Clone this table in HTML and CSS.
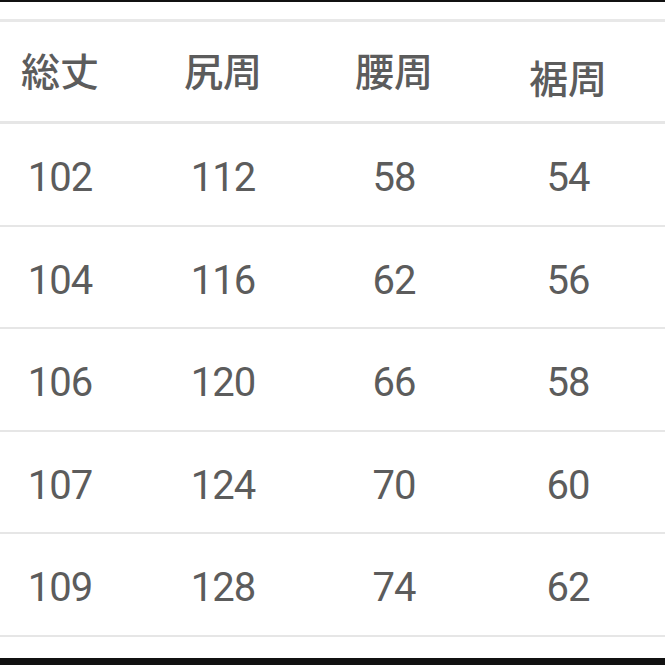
FILE: index.html
```html
<!DOCTYPE html>
<html lang="ja">
<head>
<meta charset="utf-8">
<link rel="stylesheet" href="styles.css">
</head>
<body>
<div class="screen">
  <div class="topbar"></div>
  <div class="spacer"></div>
  <div class="table">
    <div class="row head">
      <div class="cell">総丈</div>
      <div class="cell">尻周</div>
      <div class="cell">腰周</div>
      <div class="cell low">裾周</div>
    </div>
    <div class="row">
      <div class="cell">102</div><div class="cell">112</div><div class="cell">58</div><div class="cell">54</div>
    </div>
    <div class="row">
      <div class="cell">104</div><div class="cell">116</div><div class="cell">62</div><div class="cell">56</div>
    </div>
    <div class="row">
      <div class="cell">106</div><div class="cell">120</div><div class="cell">66</div><div class="cell">58</div>
    </div>
    <div class="row">
      <div class="cell">107</div><div class="cell">124</div><div class="cell">70</div><div class="cell">60</div>
    </div>
    <div class="row">
      <div class="cell">109</div><div class="cell">128</div><div class="cell">74</div><div class="cell">62</div>
    </div>
  </div>
  <div class="filler"></div>
  <div class="bottombar"></div>
</div>
</body>
</html>
```
FILE: styles.css
```css
html, body {
  margin: 0;
  padding: 0;
  background: #ffffff;
}
.screen {
  width: 665px;
  height: 665px;
  overflow: hidden;
  display: flex;
  flex-direction: column;
  background: #ffffff;
}
.topbar {
  height: 2px;
  background: #111;
  flex: none;
}
.spacer {
  height: 17px;
  flex: none;
}
.table {
  border-top: 3px solid #e8e8e8;
  flex: none;
}
.row {
  display: grid;
  grid-template-columns: 120px 206px 136px 212px;
  height: 100.5px;
  box-sizing: content-box;
  border-bottom: 2px solid #e6e6e6;
  align-items: center;
  justify-items: center;
  color: #5c5c5c;
  font-family: Roboto, "Noto Sans CJK JP", sans-serif;
  font-size: 40px;
  letter-spacing: -1px;
}
.row > .cell {
  padding-top: 8px;
}
.row.head {
  font-family: "Noto Sans CJK JP", sans-serif;
  font-size: 39px;
  font-weight: 500;
  letter-spacing: 0;
  color: #5c5c5c;
  height: 99px;
  border-bottom-width: 3px;
}
.row.head > .cell {
  padding-top: 0;
  padding-bottom: 4px;
}
.cell {
  line-height: 1;
}
.row.head > .low {
  padding-top: 10px;
  padding-bottom: 0;
}
.filler {
  flex: 1;
}
.bottombar {
  height: 7px;
  background: #111;
  flex: none;
}
```
